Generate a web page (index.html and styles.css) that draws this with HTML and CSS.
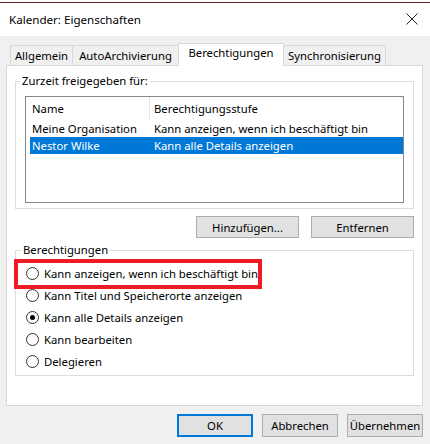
FILE: index.html
```html
<!DOCTYPE html>
<html lang="de">
<head>
    <meta charset="UTF-8">
    <title>Kalender: Eigenschaften</title>
    <link rel="stylesheet" href="styles.css">
</head>
<body>

    <div class="window">
        <div class="edge"></div>

        <div class="titlebar">
            <span class="title">Kalender: Eigenschaften</span>
            <svg class="close" width="12" height="12" viewBox="0 0 12 12">
                <path d="M0.5 0.5 L11.5 11.5 M11.5 0.5 L0.5 11.5" stroke="#222" stroke-width="1" fill="none"/>
            </svg>
        </div>

        <div class="dialog">
            <!-- Tabs -->
            <div class="tabs">
                <div class="tab tab-allgemein">Allgemein</div>
                <div class="tab tab-auto">AutoArchivierung</div>
                <div class="tab tab-rechte active">Berechtigungen</div>
                <div class="tab tab-sync">Synchronisierung</div>
            </div>

            <div class="panel">
                <fieldset class="group group-shared">
                    <legend>Zurzeit freigegeben für:</legend>
                    <div class="list">
                        <div class="list-head">
                            <span class="head-name">Name</span>
                            <span class="head-level">Berechtigungsstufe</span>
                        </div>
                        <div class="list-row">
                            <span>Meine Organisation</span>
                            <span>Kann anzeigen, wenn ich beschäftigt bin</span>
                        </div>
                        <div class="list-row selected">
                            <span>Nestor Wilke</span>
                            <span>Kann alle Details anzeigen</span>
                        </div>
                    </div>
                </fieldset>

                <div class="list-buttons">
                    <button class="btn btn-wide">Hinzufügen...</button>
                    <button class="btn btn-wide">Entfernen</button>
                </div>

                <fieldset class="group group-rights">
                    <legend>Berechtigungen</legend>
                    <label class="radio"><span class="dot"></span>Kann anzeigen, wenn ich beschäftigt bin</label>
                    <label class="radio"><span class="dot"></span>Kann Titel und Speicherorte anzeigen</label>
                    <label class="radio"><span class="dot checked"></span>Kann alle Details anzeigen</label>
                    <label class="radio"><span class="dot"></span>Kann bearbeiten</label>
                    <label class="radio"><span class="dot"></span>Delegieren</label>
                </fieldset>
            </div>

            <div class="footer">
                <button class="btn btn-default">OK</button>
                <button class="btn">Abbrechen</button>
                <button class="btn">Übernehmen</button>
            </div>
        </div>

        <!-- annotation over the first option -->
        <div class="highlight-box"></div>
    </div>

</body>
</html>
```

FILE: styles.css
```css
body {
    margin: 0;
    background-color: #f0f0f0;
    font-family: "Noto Sans", "Open Sans", sans-serif;
    font-size: 11.3px;
    color: #000;
}

.window {
    position: relative;
    width: 430px;
    height: 444px;
    overflow: hidden;
}

.edge {
    height: 2px;
    background: #fff;
    border-bottom: 1px solid #5a2424;
}

.titlebar {
    display: flex;
    align-items: center;
    justify-content: space-between;
    height: 33px;
    padding: 0 12px 0 9px;
    background: #fff;
}

.title {
    font-size: 11.6px;
    line-height: 16px;
}

.close {
    display: block;
    margin-top: -1px;
}

.dialog {
    padding: 7px 7px 0 6px;
}

/* Tabs */
.tabs {
    display: flex;
    align-items: flex-end;
    height: 22px;
    padding-left: 4px;
}

.tab {
    box-sizing: border-box;
    height: 20px;
    line-height: 19px;
    text-align: center;
    background: #f0f0f0;
    border: 1px solid #d9d9d9;
    border-bottom: none;
    margin-right: -1px;
}

.tab-allgemein { width: 63px; }
.tab-auto { width: 107px; }
.tab-rechte { width: 106px; }
.tab-sync { width: 103px; }

.tab.active {
    position: relative;
    z-index: 1;
    height: 23px;
    line-height: 18px;
    margin-bottom: -1px;
    background: #fff;
}

.panel {
    box-sizing: border-box;
    height: 341px;
    padding: 7px 8px 0 8px;
    background: #fff;
    border: 1px solid #d9d9d9;
    width: 417px;
}

/* Group boxes */
.group {
    margin: 0;
    border: 1px solid #dcdcdc;
    min-width: 0;
}

.group legend {
    padding: 0 2px;
    margin-left: -5px;
    line-height: 16px;
}

.group-shared {
    padding: 7px 9px 5px 9px;
}

.group-rights {
    margin-top: 4px;
    padding: 4px 10px 3px 10px;
}

/* List */
.list {
    height: 107px;
    box-sizing: border-box;
    border: 1px solid #828790;
    padding: 0 0 0 4px;
}

.list-head {
    display: grid;
    grid-template-columns: 120px 1fr;
    height: 23px;
    line-height: 23px;
}

.head-name {
    padding-left: 2px;
    border-right: 1px solid #e5e5e5;
}

.head-level {
    padding-left: 4px;
}

.list-row {
    display: grid;
    grid-template-columns: 122px 1fr;
    height: 17px;
    line-height: 17px;
    white-space: nowrap;
}

.list-row span {
    padding-left: 2px;
}

.list-row.selected {
    background: #0078d7;
    color: #fff;
}

/* Buttons */
.list-buttons {
    display: flex;
    justify-content: flex-end;
    gap: 12px;
    margin-top: 7px;
}

.btn {
    box-sizing: border-box;
    width: 76px;
    height: 23px;
    padding: 0;
    font-family: inherit;
    font-size: 11.3px;
    color: #000;
    background: #e1e1e1;
    border: 1px solid #adadad;
}

.btn-wide {
    width: 103px;
    height: 22px;
}

.btn-default {
    border: 2px solid #0078d7;
}

.footer {
    display: flex;
    justify-content: flex-end;
    gap: 9px;
    margin-top: 8px;
}

/* Radios */
.radio {
    display: flex;
    align-items: center;
    gap: 5px;
    height: 22px;
    white-space: nowrap;
}

.dot {
    box-sizing: border-box;
    width: 13px;
    height: 13px;
    border: 1px solid #333;
    border-radius: 50%;
    background: #fff;
    position: relative;
}

.dot.checked::after {
    content: "";
    position: absolute;
    left: 3px;
    top: 3px;
    width: 5px;
    height: 5px;
    border-radius: 50%;
    background: #000;
}

.highlight-box {
    position: absolute;
    left: 14px;
    top: 259px;
    width: 248px;
    height: 30px;
    box-sizing: border-box;
    border: 4px solid #ed1c24;
}
```
